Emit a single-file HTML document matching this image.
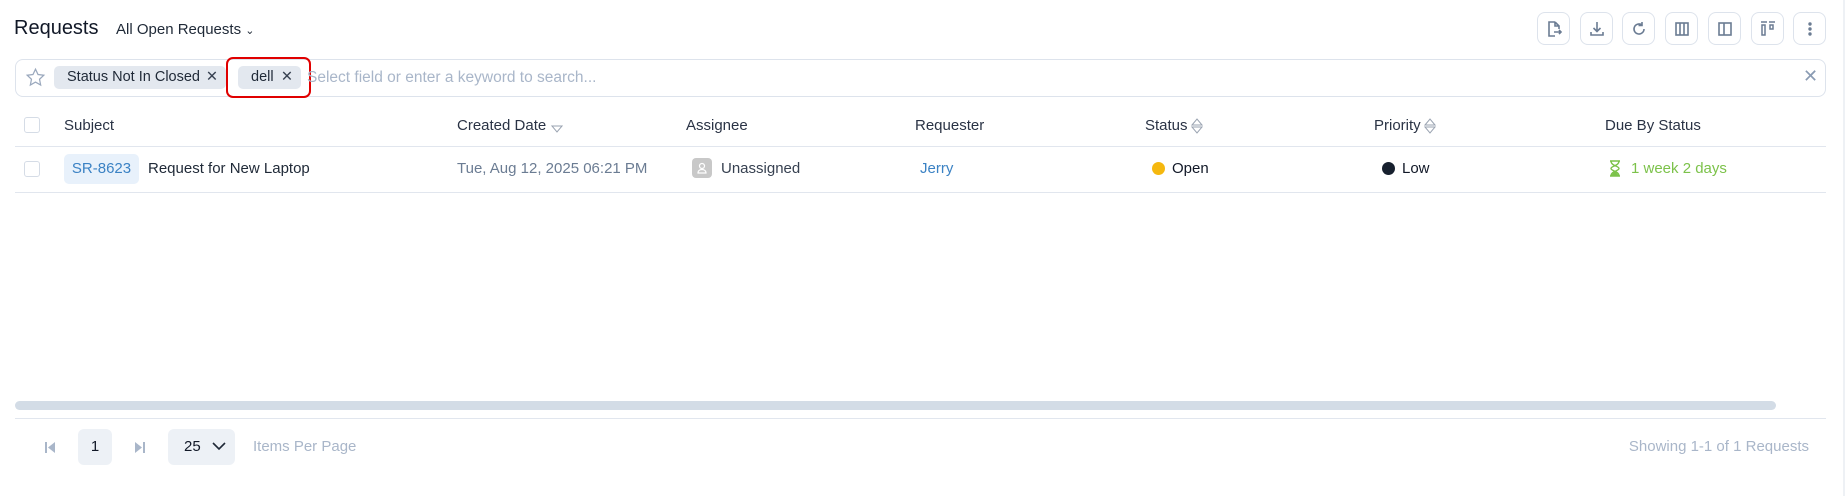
<!DOCTYPE html>
<html><head><meta charset="utf-8"><style>
*{margin:0;padding:0;box-sizing:border-box}
body{width:1845px;height:496px;background:#fff;font-family:"Liberation Sans",sans-serif;color:#1f2937;position:relative;overflow:hidden}
.a{position:absolute;white-space:nowrap}
.btn{position:absolute;top:12px;width:33px;height:33px;border:1px solid #dde3ec;border-radius:8px;display:flex;align-items:center;justify-content:center}
.hd{position:absolute;top:117px;font-size:15px;color:#2a3345}
.rw{position:absolute;top:160px;font-size:15px}
.line{position:absolute;left:15px;width:1811px;height:1px;background:#e1e6ee}
.chip{position:absolute;top:66px;height:23px;background:#e3e8ef;border-radius:5px;font-size:14.5px;color:#1f2937;line-height:23px;padding-left:13px}
.srt{position:absolute;top:117px}
</style></head><body>
<div class="a" style="left:14px;top:17px;font-size:20px;color:#111827">Requests</div>
<div class="a" style="left:116px;top:21px;font-size:15px;color:#1f2937">All Open Requests <span style="font-size:11px">&#8964;</span></div>

<div class="btn" style="left:1537px"><svg width="18" height="18" viewBox="0 0 18 18" fill="none" stroke="#6b7c93" stroke-width="1.6"><path d="M10 2H4v14h6M10 2l4 4v3M10 2v4h4M9 12h7M14 10l2 2-2 2"/></svg></div>
<div class="btn" style="left:1580px"><svg width="18" height="18" viewBox="0 0 18 18" fill="none" stroke="#6b7c93" stroke-width="1.6"><path d="M9 2v9M5.5 8L9 11.5 12.5 8M3 12v3h12v-3"/></svg></div>
<div class="btn" style="left:1622px"><svg width="18" height="18" viewBox="0 0 18 18" fill="none" stroke="#6b7c93" stroke-width="1.6"><path d="M14 9a5 5 0 1 1-2-4M12 2v3.5h-3.5"/></svg></div>
<div class="btn" style="left:1665px"><svg width="18" height="18" viewBox="0 0 18 18" fill="none" stroke="#6b7c93" stroke-width="1.6"><rect x="3" y="3" width="12" height="12"/><path d="M7 3v12M11 3v12"/></svg></div>
<div class="btn" style="left:1708px"><svg width="18" height="18" viewBox="0 0 18 18" fill="none" stroke="#6b7c93" stroke-width="1.6"><rect x="3" y="3" width="12" height="12"/><path d="M8 3v12"/></svg></div>
<div class="btn" style="left:1751px"><svg width="18" height="18" viewBox="0 0 18 18" fill="none" stroke="#6b7c93" stroke-width="1.5"><path d="M2 2h6M10 2h6"/><rect x="3" y="5" width="3" height="10"/><rect x="11" y="5" width="3" height="4"/></svg></div>
<div class="btn" style="left:1793px"><svg width="18" height="18" viewBox="0 0 18 18" fill="#6b7c93"><circle cx="9" cy="4" r="1.7"/><circle cx="9" cy="9" r="1.7"/><circle cx="9" cy="14" r="1.7"/></svg></div>

<div class="a" style="left:15px;top:59px;width:1811px;height:38px;border:1px solid #dde3ec;border-radius:8px"></div>
<svg class="a" style="left:25px;top:67px" width="21" height="21" viewBox="0 0 24 24" fill="none" stroke="#9aa8bd" stroke-width="1.4"><path d="M12 2.5l2.9 6.1 6.6.8-4.9 4.6 1.3 6.6L12 17.3 6.1 20.6l1.3-6.6L2.5 9.4l6.6-.8z"/></svg>
<div class="chip" style="left:54px;width:172px">Status Not In Closed <span style="position:absolute;right:8px;color:#374151">✕</span></div>
<div class="chip" style="left:238px;width:63px">dell <span style="position:absolute;right:8px;color:#374151">✕</span></div>
<div class="a" style="left:226px;top:57px;width:85px;height:41px;border:2.5px solid #e00000;border-radius:7px"></div>
<div class="a" style="left:307px;top:69px;font-size:15.5px;color:#a9b6c9">Select field or enter a keyword to search...</div>
<div class="a" style="left:1803px;top:66px;font-size:18px;color:#8a9bb3">✕</div>

<div class="a" style="left:24px;top:117px;width:16px;height:16px;border:1px solid #d5dce6;border-radius:3px"></div>
<div class="hd" style="left:64px">Subject</div>
<div class="hd" style="left:457px">Created Date</div>
<svg class="a" style="left:551px;top:125px" width="12" height="8" viewBox="0 0 12 8" fill="none" stroke="#9aa3b1" stroke-width="1"><path d="M1 1h10L6 7z"/></svg>
<div class="hd" style="left:686px">Assignee</div>
<div class="hd" style="left:915px">Requester</div>
<div class="hd" style="left:1145px">Status</div>
<svg class="srt" style="left:1191px" width="12" height="18" viewBox="0 0 12 18" fill="none" stroke="#9aa3b1" stroke-width="1"><path d="M1 8L6 2l5 6zM1 10l5 6 5-6z"/></svg>
<div class="hd" style="left:1374px">Priority</div>
<svg class="srt" style="left:1424px" width="12" height="18" viewBox="0 0 12 18" fill="none" stroke="#9aa3b1" stroke-width="1"><path d="M1 8L6 2l5 6zM1 10l5 6 5-6z"/></svg>
<div class="hd" style="left:1605px">Due By Status</div>
<div class="line" style="top:146px"></div>

<div class="a" style="left:24px;top:161px;width:16px;height:16px;border:1px solid #d5dce6;border-radius:3px"></div>
<div class="a" style="left:64px;top:154px;width:75px;height:30px;background:#e8f1fb;border-radius:5px;font-size:15px;color:#3b82c4;line-height:30px;text-align:center">SR-8623</div>
<div class="rw" style="left:148px;color:#1f2937">Request for New Laptop</div>
<div class="rw" style="left:457px;color:#6b7c93">Tue, Aug 12, 2025 06:21 PM</div>
<div class="a" style="left:692px;top:158px;width:20px;height:20px;background:#c8c8c8;border-radius:4px"><svg width="20" height="20" viewBox="0 0 20 20" fill="none" stroke="#fff" stroke-width="1.2"><circle cx="10" cy="8" r="2.5"/><path d="M6 15c0-2.5 2-3.5 4-3.5s4 1 4 3.5z"/></svg></div>
<div class="rw" style="left:721px;color:#374151">Unassigned</div>
<div class="rw" style="left:920px;color:#3b82c4">Jerry</div>
<div class="a" style="left:1152px;top:162px;width:13px;height:13px;border-radius:50%;background:#f5b80f"></div>
<div class="rw" style="left:1172px;color:#111827">Open</div>
<div class="a" style="left:1382px;top:162px;width:13px;height:13px;border-radius:50%;background:#17202e"></div>
<div class="rw" style="left:1402px;color:#111827">Low</div>
<svg class="a" style="left:1609px;top:160px" width="12" height="17" viewBox="0 0 12 17" fill="none" stroke="#7cc24a" stroke-width="1.4"><path d="M1 1h10M1 16h10M2 1c0 5 8 5 8 7.5S2 11 2 16M10 1c0 5-8 5-8 7.5S10 11 10 16"/><path d="M3.5 15l2.5-3 2.5 3z" fill="#7cc24a"/></svg>
<div class="rw" style="left:1631px;color:#7cc24a">1 week 2 days</div>
<div class="line" style="top:192px"></div>

<div class="a" style="left:1843px;top:0;width:2px;height:496px;background:#eef1f5"></div>
<div class="a" style="left:15px;top:401px;width:1761px;height:9px;background:#d3dce6;border-radius:5px"></div>
<div class="line" style="top:418px"></div>

<svg class="a" style="left:44px;top:442px" width="12" height="11" viewBox="0 0 12 11" fill="#a9b6c9"><rect x="1" y="0" width="2" height="11"/><path d="M11 0v11L4 5.5z"/></svg>
<div class="a" style="left:78px;top:429px;width:34px;height:36px;background:#edf1f6;border-radius:6px;font-size:15px;line-height:36px;text-align:center;color:#111827">1</div>
<svg class="a" style="left:134px;top:442px" width="12" height="11" viewBox="0 0 12 11" fill="#a9b6c9"><path d="M1 0v11l7-5.5z"/><rect x="9" y="0" width="2" height="11"/></svg>
<div class="a" style="left:168px;top:429px;width:67px;height:36px;background:#edf1f6;border-radius:6px;font-size:15px;line-height:36px;color:#111827;padding-left:16px">25<svg style="position:absolute;left:44px;top:13px" width="14" height="9" viewBox="0 0 14 9" fill="none" stroke="#1f2937" stroke-width="1.6"><path d="M1 1l6 6 6-6"/></svg></div>
<div class="a" style="left:253px;top:438px;font-size:15px;color:#a9b6c9">Items Per Page</div>
<div class="a" style="right:36px;top:438px;font-size:15px;color:#a9b6c9">Showing 1-1 of 1 Requests</div>
</body></html>
